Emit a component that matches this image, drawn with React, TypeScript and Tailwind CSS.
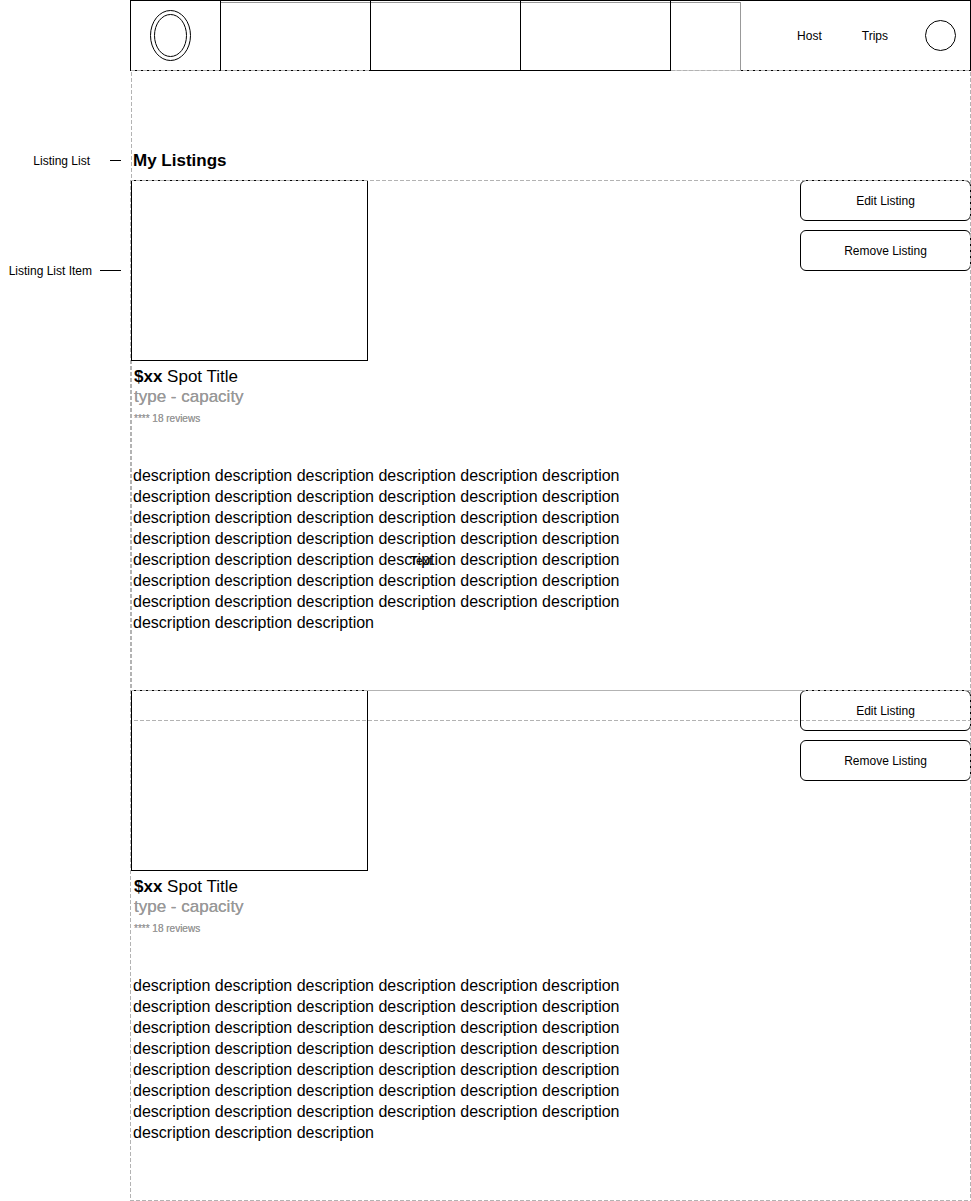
import React from "react";

const DESCRIPTION = Array(45).fill("description").join(" ");

const H_DASH = "bg-[repeating-linear-gradient(90deg,#b3b3b3_0_4px,transparent_4px_6px)]";
const H_DASH_SHIFTED =
  "bg-[repeating-linear-gradient(90deg,#b3b3b3_0_1px,transparent_1px_3px,#b3b3b3_3px_6px)]";
const V_DASH = "bg-[repeating-linear-gradient(180deg,#b3b3b3_0_4px,transparent_4px_6px)]";
const V_DASH_SHIFTED =
  "bg-[repeating-linear-gradient(180deg,transparent_0_2px,#b3b3b3_2px_6px)]";

function DashedFrame({
  className,
  shiftBottom = false,
  shiftSides = false,
}: {
  className: string;
  shiftBottom?: boolean;
  shiftSides?: boolean;
}) {
  const side = shiftSides ? V_DASH_SHIFTED : V_DASH;
  return (
    <div aria-hidden="true" className={`pointer-events-none absolute ${className}`}>
      <span className={`absolute inset-x-0 top-0 h-px ${H_DASH}`} />
      <span className={`absolute inset-x-0 bottom-0 h-px ${shiftBottom ? H_DASH_SHIFTED : H_DASH}`} />
      <span className={`absolute inset-y-0 left-0 w-px ${side}`} />
      <span className={`absolute inset-y-0 right-0 w-px ${side}`} />
    </div>
  );
}

function Annotation({ label, gap, line }: { label: string; gap: string; line: string }) {
  return (
    <div className={`flex h-5 items-center justify-end whitespace-nowrap ${gap}`}>
      <span>{label}</span>
      <span className={`mb-px h-px bg-black ${line}`} />
    </div>
  );
}

function Header() {
  return (
    <header className="flex h-[71px] border-t border-r border-black text-[12px]">
      <a
        href="#"
        aria-label="Home"
        className="flex w-[90px] items-center justify-center border-b border-l border-black pr-2.5"
      >
        <svg width="41" height="51" viewBox="0 0 41 51" fill="none" stroke="black">
          <ellipse cx="20.5" cy="25.5" rx="20" ry="25" />
          <ellipse cx="20.5" cy="25.5" rx="16" ry="21" />
        </svg>
      </a>
      <div className="w-[150px] border-b border-l border-black pt-px">
        <div className="h-px bg-[#999]" />
      </div>
      <div className="relative z-10 w-[150px] border-b border-l border-black pt-px">
        <div className="h-px bg-[#999]" />
      </div>
      <div className="relative z-10 w-[150px] border-b border-l border-black pt-px">
        <div className="h-px bg-[#999]" />
      </div>
      <div className="flex w-[71px] border-l border-black pt-px">
        <div className="flex-1 border-t border-r border-b border-[#999] border-b-[#ccc]" />
      </div>
      <nav className="flex flex-1 items-center justify-end border-b border-black pr-[14px]">
        <a href="#host" className="mr-10">
          Host
        </a>
        <a href="#trips" className="mr-[37px]">
          Trips
        </a>
        <a href="#profile" aria-label="Profile">
          <svg width="31" height="31" viewBox="0 0 31 31" fill="none" stroke="black">
            <circle cx="15.5" cy="15.5" r="15" />
          </svg>
        </a>
      </nav>
    </header>
  );
}

function ListingItem({ placeholder, shiftBottom }: { placeholder?: string; shiftBottom?: boolean }) {
  return (
    <li className="relative pb-[57px]">
      <div className="relative flex items-start justify-between pl-px">
        <div className="h-[181px] w-[237px] border border-black" />
        <div className="flex w-[171px] flex-col gap-[9px] text-[12px]">
          <button type="button" className="h-[41px] rounded-md border border-black">
            Edit Listing
          </button>
          <button type="button" className="h-[41px] rounded-md border border-black">
            Remove Listing
          </button>
        </div>
      </div>
      <div className="pt-1.5 pl-1 leading-5">
        <h2 className="text-[17px] leading-5">
          <b>$xx</b> Spot Title
        </h2>
        <p className="text-[17px] leading-5 text-[#999] [text-shadow:0_0_0_#999]">type - capacity</p>
        <p className="mt-0.5 text-[10px] leading-5 text-[#999] [text-shadow:0_0_0_#999]">
          **** 18 reviews
        </p>
      </div>
      <div className="relative mt-9 max-w-[500px] pl-[3px]">
        <p className="text-[16px] leading-[21px]">{DESCRIPTION}</p>
        {placeholder && (
          <span className="absolute top-[88px] left-[280px] text-[12px] leading-4">{placeholder}</span>
        )}
      </div>
      <DashedFrame className="inset-x-0 top-0 -bottom-px" shiftBottom={shiftBottom} />
    </li>
  );
}

export default function App() {
  return (
    <div className="flex min-h-screen bg-white font-['Liberation_Sans',Arial,sans-serif] text-black">
      <aside className="flex w-[130px] shrink-0 flex-col gap-[90px] pt-[151px] pr-[9px] text-[12px]">
        <Annotation label="Listing List" gap="gap-5" line="w-[11px]" />
        <Annotation label="Listing List Item" gap="gap-2" line="w-[21px]" />
      </aside>
      <div className="min-w-0 flex-1 pb-px">
        <Header />
        <main className="relative pt-20">
          <DashedFrame className="-top-px right-0 left-px h-[651px]" shiftBottom shiftSides />
          <h1 className="pb-[9px] pl-[3px] text-[17px] leading-5 font-bold">My Listings</h1>
          <ul>
            <ListingItem placeholder="Text" shiftBottom />
            <ListingItem />
          </ul>
        </main>
      </div>
    </div>
  );
}
